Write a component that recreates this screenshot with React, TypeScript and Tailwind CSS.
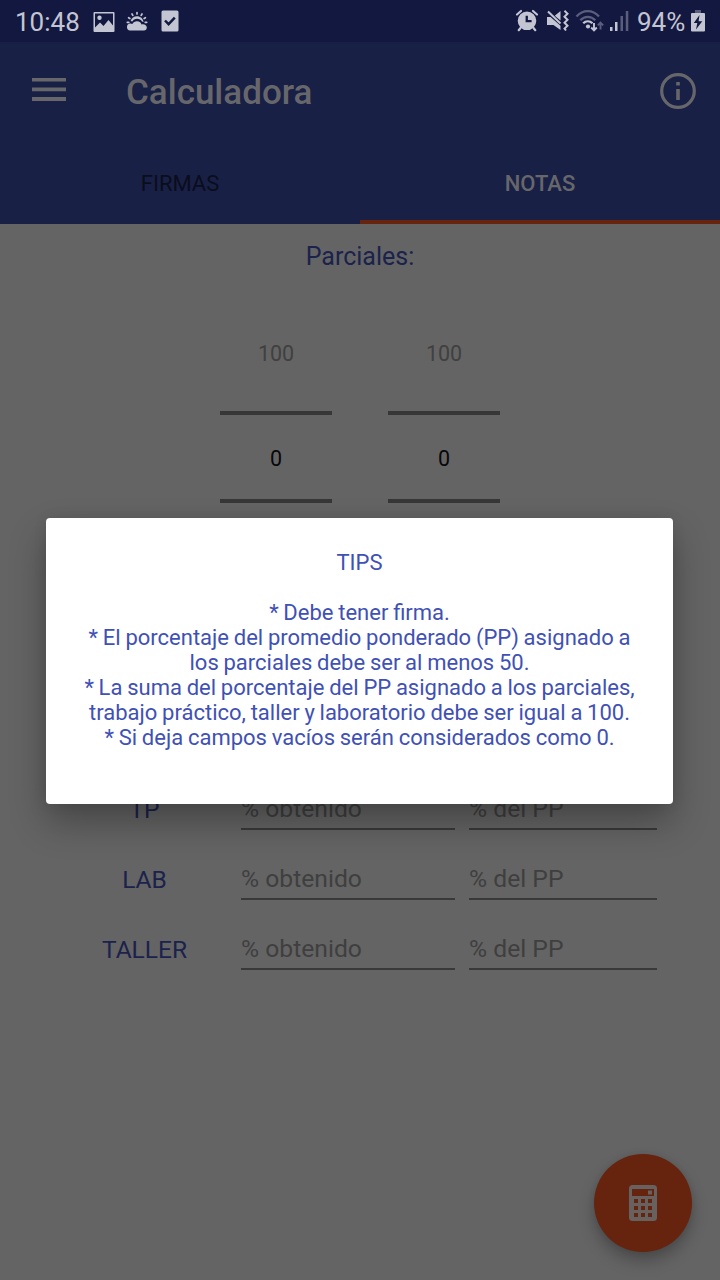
import React from 'react';

function StatusBar() {
  return (
    <header className="flex h-[42px] items-center bg-[#131840] pr-[15px] pl-[15px] text-[#c4c5d2]">
      <span className="w-[78px] pt-[2px] text-[26px] leading-[40px] whitespace-nowrap">10:48</span>
      <svg width="22" height="22" viewBox="0 0 22 22" className="mt-[1px] shrink-0">
        <path fill="currentColor" fillRule="evenodd" d="M1.500 1h19A1 1 0 0 1 21.500 2v18a1 1 0 0 1-1 1h-19a1 1 0 0 1-1-1V2a1 1 0 0 1 1-1ZM2 2.500v14l5-5 3.500 3.500 5-6 4.500 5.500V2.500ZM6.500 4.600a2.200 2.200 0 1 1 0 4.400 2.200 2.200 0 0 1 0-4.400Z" />
      </svg>
      <svg width="24" height="22" viewBox="0 0 24 22" className="ml-[10px] shrink-0">
        <g fill="none" stroke="currentColor" strokeWidth="1.700" strokeLinecap="round">
          <path d="M12 2.500v1.500M7 4l.8 1.400M17 4l-.8 1.400M3.600 7.700l1.300.8M20.400 7.700l-1.300.8M2.300 12.300h1.500M20.200 12.300h1.500" />
        </g>
        <path fill="currentColor" d="M5.600 11C6.500 8 9 6.200 12 6.200c3.400 0 6.200 2.400 6.500 5.800l-1.500-.5C16 9.700 14.200 8.800 12 8.800c-2 0-3.700.9-4.600 2.600Z" />
        <path fill="currentColor" d="M5 20.500a3.500 3.500 0 0 1-.2-6.900c.8-.2 1.700 0 2.400.4a5.200 5.200 0 0 1 9.400.4c2.600-.9 5.200.8 5.200 3.200 0 1.800-1.200 2.900-2.800 2.900Z" />
      </svg>
      <svg width="18" height="22" viewBox="0 0 18 22" className="ml-[12px] shrink-0">
        <path fill="currentColor" d="M2 .5h14a1.500 1.500 0 0 1 1.500 1.500v18a1.500 1.500 0 0 1-1.500 1.500H2A1.500 1.500 0 0 1 .5 20V2A1.500 1.500 0 0 1 2 .5Z" />
        <path d="m4 10.500 3.600 3.700 6.200-6.500" fill="none" stroke="#131840" strokeWidth="2.500" />
      </svg>
      <svg width="24" height="24" viewBox="0 0 24 24" className="ml-auto shrink-0">
        <path fill="currentColor" fillRule="evenodd" d="M12 2.500a9.300 9.300 0 1 1 0 18.600A9.300 9.300 0 0 1 12 2.500Zm-1.400 4.200v6.600h6v-2.200h-3.700V6.700Z" />
        <path d="M2 5.500 6 2M22 5.500 18 2M5.500 19 3.700 21.200M18.500 19l1.800 2.200" fill="none" stroke="currentColor" strokeWidth="2.200" strokeLinecap="round" />
      </svg>
      <svg width="24" height="24" viewBox="0 0 24 24" className="ml-[6px] shrink-0">
        <path fill="currentColor" d="M2 8h3.500l10 8.800V21L8.500 16H2ZM9.800 6.800 15.500 2v9.500Z" />
        <path d="M3 2.500 15.500 14.500" stroke="currentColor" strokeWidth="2" fill="none" />
        <path d="m19.500 1.800 3 2.900-3 3 3 3-3 3 3 3-3 2.800 1.500 2" stroke="currentColor" strokeWidth="2" fill="none" />
      </svg>
      <svg width="30" height="24" viewBox="0 0 30 24" className="ml-[6px] shrink-0">
        <g fill="none" strokeWidth="2.300">
          <path d="M1.500 7.500C8 .2 17.500.2 24 7.500" stroke="#5a5e7c" />
          <path d="M5.300 11.300c4.300-4.700 10.700-4.700 15 0" stroke="#5a5e7c" />
          <path d="M8.200 14.300c2.700-2.700 6.600-2.700 9.300 0" stroke="currentColor" />
        </g>
        <circle cx="13" cy="17.500" r="2.100" fill="currentColor" />
        <path d="M19 14v7.500M16.200 18.500l2.800 2.800 2.800-2.800" fill="none" stroke="currentColor" strokeWidth="1.900" />
        <path d="M25.500 20.500v-7M22.800 16.300l2.700-2.800 2.700 2.800" fill="none" stroke="#5a5e7c" strokeWidth="1.900" />
      </svg>
      <svg width="19" height="22" viewBox="0 0 19 22" className="ml-[5px] shrink-0">
        <path d="M0 17h2.500v4H0ZM5 12h2.500v9H5Z" fill="currentColor" />
        <path d="M10.500 6H13v15h-2.500ZM15.800 1h2.500v20h-2.500Z" fill="#5a5e7c" />
      </svg>
      <span className="ml-[8px] w-[49px] pt-[2px] text-[26px] leading-[40px] whitespace-nowrap">94%</span>
      <svg width="14" height="22" viewBox="0 0 14 22" className="ml-[5px] shrink-0">
        <path d="M4 0h6v3H4Z" fill="#5a5e7c" />
        <path d="M1 3h12a1 1 0 0 1 1 1v16.500a1 1 0 0 1-1 1H1a1 1 0 0 1-1-1V4a1 1 0 0 1 1-1Z" fill="currentColor" />
        <path d="M8.500 5 2.800 13h3.500L5 19.500l6.300-8.300H7.600Z" fill="#131840" />
      </svg>
    </header>
  );
}

function Toolbar() {
  return (
    <div className="flex h-[98px] items-center bg-[#192046] pr-6 pl-8 text-[#67676b]">
      <svg width="34" height="24" viewBox="0 0 34 24" fill="currentColor" className="-mt-[2px] shrink-0">
        <path d="M0 0h34v3.600H0ZM0 9.600h34v3.600H0ZM0 19h34v4H0Z" />
      </svg>
      <h1 className="ml-[60px] pt-1 text-[35px] leading-[42px] font-medium whitespace-nowrap">Calculadora</h1>
      <svg width="36" height="36" viewBox="0 0 36 36" className="ml-auto shrink-0">
        <circle cx="18" cy="18" r="16.300" fill="none" stroke="currentColor" strokeWidth="3.200" />
        <path d="M16.200 9h3.600v3.500h-3.600ZM16.200 16h3.600v11h-3.600Z" fill="currentColor" />
      </svg>
    </div>
  );
}

function Tabs() {
  return (
    <nav className="grid h-[84px] grid-cols-2 bg-[#192046] text-[22px]">
      <button className="pt-[3px] text-[#0a0d1c]">FIRMAS</button>
      <button className="border-b-4 border-[#66230e] pt-[7px] font-medium text-[#67676b]">NOTAS</button>
    </nav>
  );
}

function Picker() {
  return (
    <div className="flex w-[112px] flex-col text-center text-[21.500px] leading-[26px]">
      <span className="text-[#404040]">100</span>
      <div className="mt-[44px] flex h-[92px] items-center justify-center border-y-4 border-[#373737] pt-1 text-[#080808]">0</div>
    </div>
  );
}

function ScoreRow({ label }: { label: string }) {
  return (
    <div className="flex h-[70px] items-end text-[24.700px] leading-[30px] whitespace-nowrap">
      <span className="w-[193px] pb-[5px] text-center text-[24.500px] text-[#1b224c]">{label}</span>
      <span className="w-[214px] border-b-2 border-[#393939] pb-[4px] text-[#3f3f3f]">% obtenido</span>
      <span className="ml-[14px] w-[188px] border-b-2 border-[#393939] pb-[4px] text-[#3f3f3f]">% del PP</span>
    </div>
  );
}

function TipsDialog() {
  return (
    <section
      role="dialog"
      className="absolute top-[518px] left-[46px] h-[286px] w-[627px] rounded-[4px] bg-white pt-8 text-center text-[22px] leading-[25px] [word-spacing:-0.700px] whitespace-nowrap text-[#3f51b5] shadow-[0_18px_36px_rgba(0,0,0,0.3),0_0_14px_rgba(0,0,0,0.08)]"
    >
      <h2>TIPS</h2>
      <p className="mt-[25px]">* Debe tener firma.</p>
      <p>
        * El porcentaje del promedio ponderado (PP) asignado a<br />
        los parciales debe ser al menos 50.
      </p>
      <p>
        * La suma del porcentaje del PP asignado a los parciales,<br />
        trabajo práctico, taller y laboratorio debe ser igual a 100.
      </p>
      <p>* Si deja campos vacíos serán considerados como 0.</p>
    </section>
  );
}

function CalculateButton() {
  return (
    <button className="absolute top-[1154px] left-[594px] flex size-[98px] items-center justify-center rounded-full bg-[#66230e] shadow-[0_9px_16px_rgba(0,0,0,0.26),0_0_6px_rgba(0,0,0,0.08)]">
      <svg width="28" height="36" viewBox="0 0 28 36">
        <rect width="28" height="36" rx="3.500" fill="#67615f" />
        <path d="M3 4h22v7H3Z" fill="#66230e" />
        <path d="M19 5.500h4v4h-4Z" fill="#67615f" />
        <path d="M5 14h4v4H5ZM12 14h4v4h-4ZM19 14h4v4h-4ZM5 21h4v4H5ZM12 21h4v4h-4ZM19 21h4v4h-4ZM5 28h4v4H5ZM12 28h4v4h-4ZM19 28h4v4h-4Z" fill="#66230e" />
      </svg>
    </button>
  );
}

export default function App() {
  return (
    <div className="relative flex h-[1280px] w-[720px] flex-col overflow-hidden bg-[#646464] font-['Roboto',sans-serif]">
      <StatusBar />
      <Toolbar />
      <Tabs />
      <main className="flex flex-col">
        <h2 className="mt-[18px] text-center text-[25px] leading-[30px] text-[#1b224c]">Parciales:</h2>
        <div className="mt-[69px] flex justify-center gap-14">
          <Picker />
          <Picker />
        </div>
        <div className="mt-[257px] pl-12">
          <ScoreRow label="TP" />
          <ScoreRow label="LAB" />
          <ScoreRow label="TALLER" />
        </div>
      </main>
      <TipsDialog />
      <CalculateButton />
    </div>
  );
}
